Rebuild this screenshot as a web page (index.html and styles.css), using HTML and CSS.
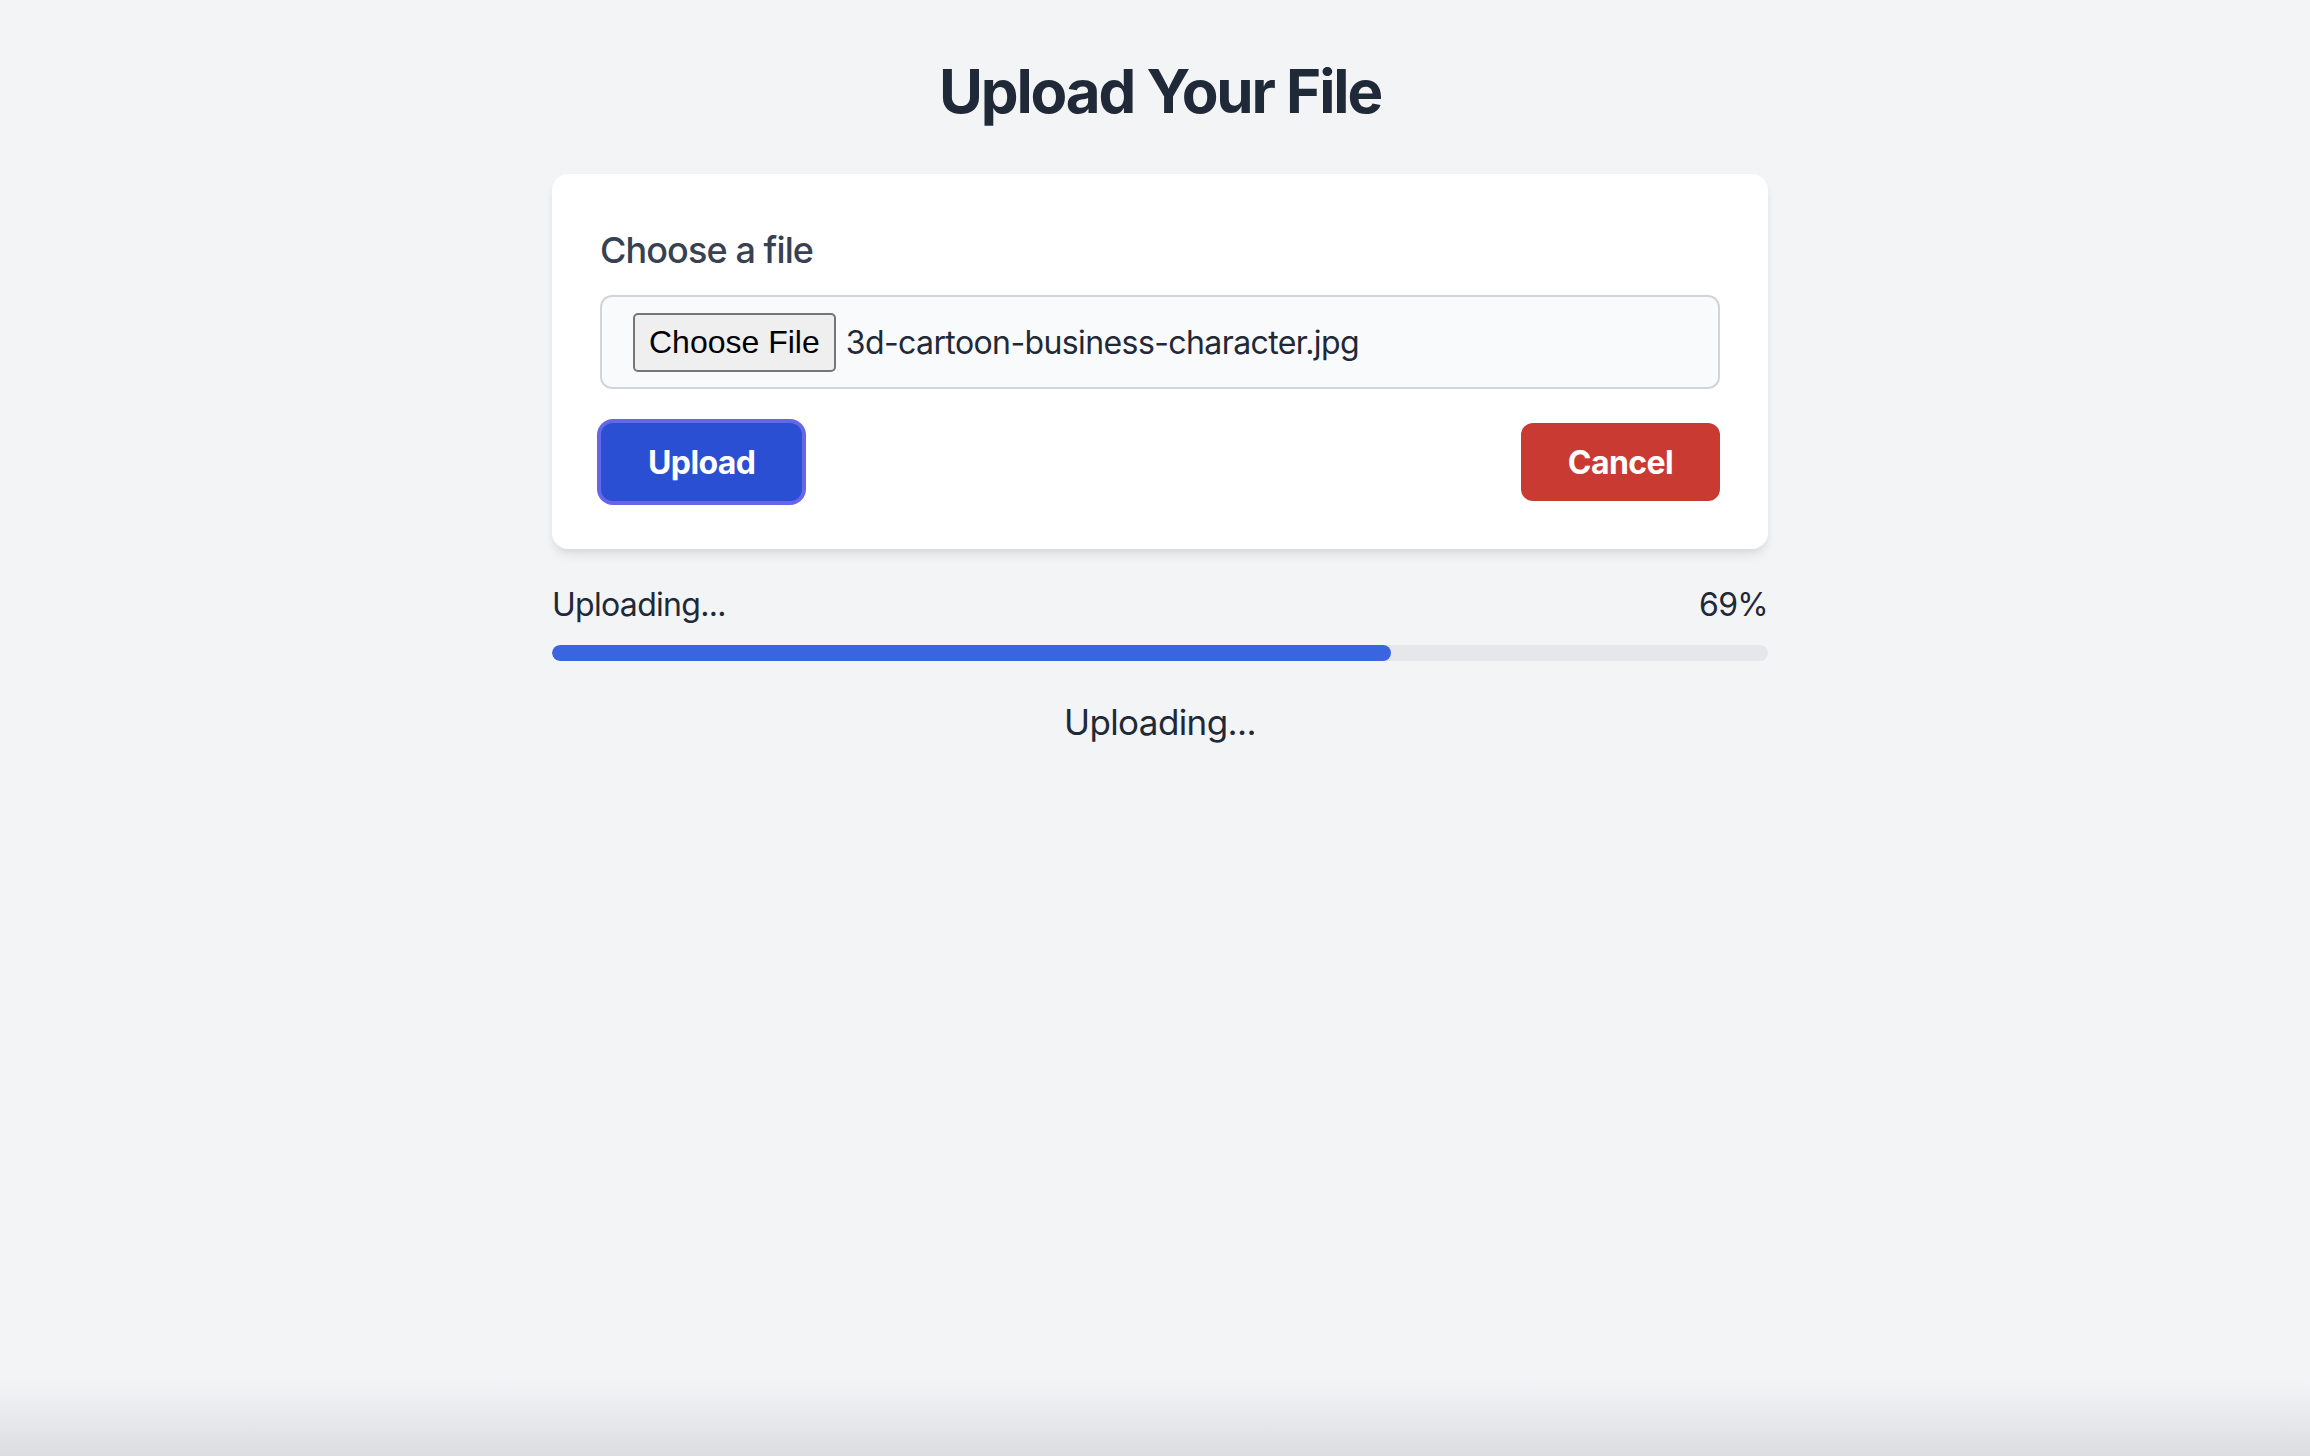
FILE: index.html
```html
<!DOCTYPE html>
<html lang="en">
<head>
<meta charset="utf-8">
<title>Upload Your File</title>
<link rel="stylesheet" href="styles.css">
</head>
<body>
<main class="page">
  <h1 class="title">Upload Your File</h1>
  <section class="card">
    <label class="label">Choose a file</label>
    <div class="file-input">
      <span class="file-btn">Choose File</span>
      <span class="file-name">3d-cartoon-business-character.jpg</span>
    </div>
    <div class="actions">
      <button class="btn btn-upload">Upload</button>
      <button class="btn btn-cancel">Cancel</button>
    </div>
  </section>
  <section class="progress">
    <div class="progress-head">
      <span>Uploading...</span>
      <span>69%</span>
    </div>
    <div class="track"><div class="fill" style="width:69%"></div></div>
    <p class="status">Uploading...</p>
  </section>
</main>
</body>
</html>
```
FILE: styles.css
```css
html, body {
  margin: 0;
  padding: 0;
}
body {
  min-height: 100vh;
  box-sizing: border-box;
  padding-left: 10px;
  background: linear-gradient(to bottom, #f3f4f6 0, #f3f4f6 calc(100% - 75px), #dcdde0 100%);
  font-family: Inter, "Noto Sans", sans-serif;
  color: #1f2937;
}
.page {
  width: 1216px;
  margin: 0 auto;
  padding-top: 55px;
  display: flex;
  flex-direction: column;
}
.title {
  margin: 0 0 47px;
  font-size: 60px;
  line-height: 72px;
  font-weight: 700;
  letter-spacing: -2.1px;
  text-align: center;
  color: #1f2937;
}
.card {
  background: #fff;
  border-radius: 16px;
  padding: 48px;
  box-shadow: 0 8px 12px -2px rgba(0,0,0,0.08), 0 3px 8px -3px rgba(0,0,0,0.08);
  display: flex;
  flex-direction: column;
}
.label {
  font-size: 36px;
  line-height: 56px;
  font-weight: 500;
  letter-spacing: -0.9px;
  color: #374151;
  margin-bottom: 17px;
}
.file-input {
  display: flex;
  align-items: center;
  gap: 10px;
  height: 94px;
  box-sizing: border-box;
  padding: 0 31px;
  border: 2px solid #d1d5db;
  border-radius: 12px;
  background: #f9fafb;
}
.file-btn {
  font-family: "Liberation Sans", Arial, sans-serif;
  font-size: 32px;
  line-height: 55px;
  color: #000;
  background: #efefef;
  border: 2px solid #767676;
  border-radius: 5px;
  padding: 0 14px;
}
.file-name {
  font-size: 32px;
  letter-spacing: -0.6px;
  color: #1f2937;
}
.actions {
  margin-top: 34px;
  display: flex;
  justify-content: space-between;
  align-items: center;
}
.btn {
  font-family: Inter, "Noto Sans", sans-serif;
  font-size: 32px;
  font-weight: 700;
  letter-spacing: -0.6px;
  color: #fff;
  border: 0;
  border-radius: 12px;
  height: 78px;
  padding: 0 47px;
  cursor: pointer;
}
.btn-upload {
  background: #2b4fd2;
  box-shadow: 0 0 0 4px #6566e8;
  margin-left: 1px;
}
.btn-cancel {
  background: #c93a32;
}
.progress {
  margin-top: 32px;
  display: flex;
  flex-direction: column;
}
.progress-head {
  display: flex;
  justify-content: space-between;
  font-size: 32px;
  line-height: 48px;
  letter-spacing: -0.7px;
  color: #1f2937;
}
.track {
  margin-top: 16px;
  height: 16px;
  border-radius: 8px;
  background: #e5e7eb;
  overflow: hidden;
}
.fill {
  height: 100%;
  background: #3a64e0;
  border-radius: 8px;
}
.status {
  margin: 33px 0 0;
  text-align: center;
  font-size: 35px;
  line-height: 56px;
  letter-spacing: -0.6px;
  color: #1f2937;
}
```
